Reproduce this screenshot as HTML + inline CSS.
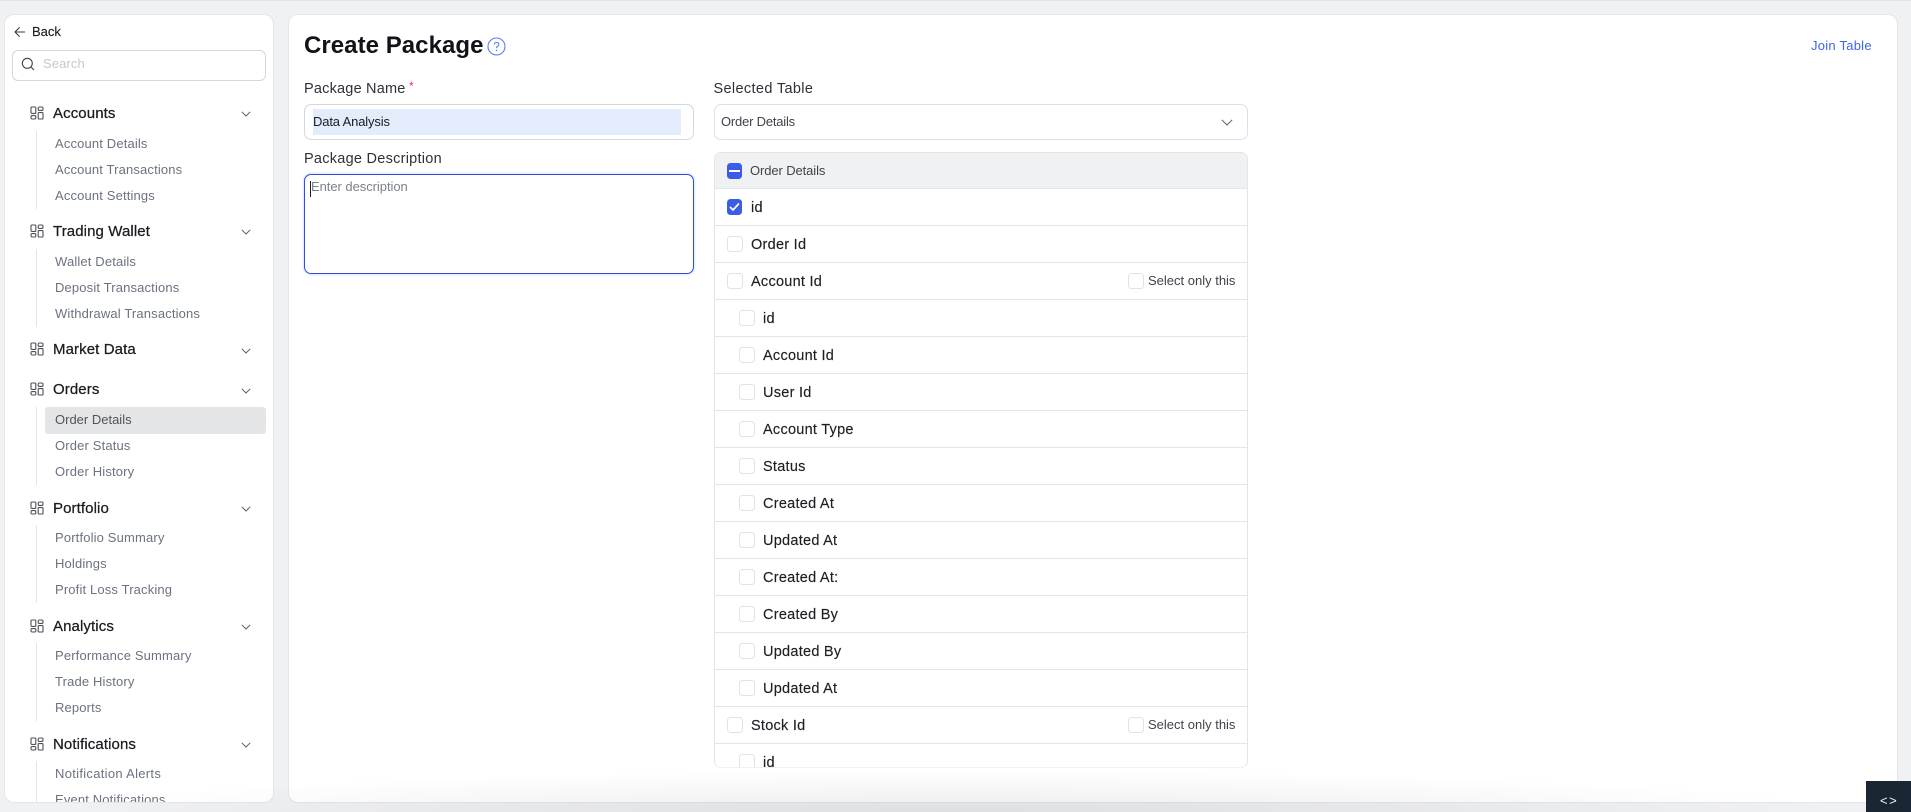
<!DOCTYPE html>
<html><head><meta charset="utf-8"><style>
html,body{margin:0;padding:0;width:1911px;height:812px;overflow:hidden;background:#f0f1f3;font-family:"Liberation Sans",sans-serif;color:#1a1c21}
*{box-sizing:border-box}
.a{position:absolute}
.t{position:absolute;white-space:nowrap;line-height:20px;height:20px}
#top{position:absolute;left:0;top:0;width:1911px;height:1px;background:#e2e5ea}
.card{position:absolute;background:#fff;border:1px solid #e4e6e9;border-radius:10px;top:14px;height:789px;overflow:hidden}
.h{font-size:15px;letter-spacing:.1px;color:#1a1c21;left:48px;margin-top:1px;-webkit-text-stroke:.25px #1a1c21}
.s{font-size:13px;letter-spacing:.15px;color:#6b7280;left:50px;margin-top:1px}
.line{position:absolute;left:31px;width:1px;background:#e1e5ea}
.ic{position:absolute;left:25px}
.ch{position:absolute;left:236px}
.row{position:absolute;left:0;width:100%;height:37px;border-bottom:1px solid #e2e5ea}
.cb{position:absolute;width:16px;height:16px;border:1px solid #dfe2e7;border-radius:3.5px;background:#fff;margin-top:-1px}
.cb.sub{margin-left:1px}
.lbl{position:absolute;font-size:14.5px;line-height:20px;white-space:nowrap;letter-spacing:.26px;color:#1d1f24;margin-left:2px;-webkit-text-stroke:.15px #1d1f24}
.lbl.sub{margin-left:3px}
.only{position:absolute;left:433px;top:9px;font-size:13px;line-height:18px;color:#3f434b;white-space:nowrap;letter-spacing:0;margin-top:-1px}
</style></head><body>
<div id="top"></div>

<div class="card" style="left:4px;width:270px">
 <svg class="a" style="left:9px;top:11px" width="12" height="12" viewBox="0 0 12 12" fill="none" stroke="#3a3d44" stroke-width="1.1"><path d="M11 6H1.2M5.600 1.400 1 6l4.600 4.600"/></svg>
 <div class="t" style="left:27px;top:7px;font-size:13px;letter-spacing:0;-webkit-text-stroke:.15px #1a1c21">Back</div>
 <div class="a" style="left:7px;top:35px;width:254px;height:31px;border:1px solid #d5d7da;border-radius:6px"></div>
 <svg class="a" style="left:16px;top:42px" width="14" height="14" viewBox="0 0 14 14" fill="none" stroke="#3f434b" stroke-width="1.1"><circle cx="6.300" cy="6.300" r="5"/><path d="m10 10 3 3"/></svg>
 <div class="t" style="left:38px;top:39px;font-size:13px;color:#c5c8cd;letter-spacing:.1px">Search</div>

 <div class="a" style="left:40px;top:392px;width:221px;height:27px;background:#e4e5e7;border-radius:3px"></div>

 <!-- Accounts -->
 <svg class="ic" style="top:91px" width="14" height="14" viewBox="0 0 14 14" fill="none" stroke="#4b4f57" stroke-width="1.1"><rect x="1" y="1" width="4.8" height="6.4" rx=".8"/><rect x="8.2" y="1" width="4.8" height="3.4" rx="1.2"/><rect x="1" y="9.6" width="4.8" height="3.4" rx="1.2"/><rect x="8.2" y="6.6" width="4.8" height="6.4" rx=".8"/></svg>
 <div class="t h" style="top:88px">Accounts</div>
 <svg class="ch" style="top:96px" width="10" height="6" viewBox="0 0 10 6" fill="none" stroke="#5c6068" stroke-width="1"><path d="m.8.8 4.2 4.2L9.200.8"/></svg>
 <div class="line" style="top:116px;height:78px"></div>
 <div class="t s" style="top:118px">Account Details</div>
 <div class="t s" style="top:144px">Account Transactions</div>
 <div class="t s" style="top:170px">Account Settings</div>

 <!-- Trading Wallet -->
 <svg class="ic" style="top:209px" width="14" height="14" viewBox="0 0 14 14" fill="none" stroke="#4b4f57" stroke-width="1.1"><rect x="1" y="1" width="4.8" height="6.4" rx=".8"/><rect x="8.2" y="1" width="4.8" height="3.4" rx="1.2"/><rect x="1" y="9.6" width="4.8" height="3.4" rx="1.2"/><rect x="8.2" y="6.6" width="4.8" height="6.4" rx=".8"/></svg>
 <div class="t h" style="top:206px">Trading Wallet</div>
 <svg class="ch" style="top:214px" width="10" height="6" viewBox="0 0 10 6" fill="none" stroke="#5c6068" stroke-width="1"><path d="m.8.8 4.2 4.2L9.200.8"/></svg>
 <div class="line" style="top:234px;height:78px"></div>
 <div class="t s" style="top:236px">Wallet Details</div>
 <div class="t s" style="top:262px">Deposit Transactions</div>
 <div class="t s" style="top:288px">Withdrawal Transactions</div>

 <!-- Market Data -->
 <svg class="ic" style="top:327px" width="14" height="14" viewBox="0 0 14 14" fill="none" stroke="#4b4f57" stroke-width="1.1"><rect x="1" y="1" width="4.8" height="6.4" rx=".8"/><rect x="8.2" y="1" width="4.8" height="3.4" rx="1.2"/><rect x="1" y="9.6" width="4.8" height="3.4" rx="1.2"/><rect x="8.2" y="6.6" width="4.8" height="6.4" rx=".8"/></svg>
 <div class="t h" style="top:324px">Market Data</div>
 <svg class="ch" style="top:333px" width="10" height="6" viewBox="0 0 10 6" fill="none" stroke="#5c6068" stroke-width="1"><path d="m.8.8 4.2 4.2L9.200.8"/></svg>

 <!-- Orders -->
 <svg class="ic" style="top:367px" width="14" height="14" viewBox="0 0 14 14" fill="none" stroke="#4b4f57" stroke-width="1.1"><rect x="1" y="1" width="4.8" height="6.4" rx=".8"/><rect x="8.2" y="1" width="4.8" height="3.4" rx="1.2"/><rect x="1" y="9.6" width="4.8" height="3.4" rx="1.2"/><rect x="8.2" y="6.6" width="4.8" height="6.4" rx=".8"/></svg>
 <div class="t h" style="top:364px">Orders</div>
 <svg class="ch" style="top:373px" width="10" height="6" viewBox="0 0 10 6" fill="none" stroke="#5c6068" stroke-width="1"><path d="m.8.8 4.2 4.2L9.200.8"/></svg>
 <div class="line" style="top:392px;height:78px"></div>
 <div class="t s" style="top:394px;color:#50545c;letter-spacing:0">Order Details</div>
 <div class="t s" style="top:420px">Order Status</div>
 <div class="t s" style="top:446px">Order History</div>

 <!-- Portfolio -->
 <svg class="ic" style="top:486px" width="14" height="14" viewBox="0 0 14 14" fill="none" stroke="#4b4f57" stroke-width="1.1"><rect x="1" y="1" width="4.8" height="6.4" rx=".8"/><rect x="8.2" y="1" width="4.8" height="3.4" rx="1.2"/><rect x="1" y="9.6" width="4.8" height="3.4" rx="1.2"/><rect x="8.2" y="6.6" width="4.8" height="6.4" rx=".8"/></svg>
 <div class="t h" style="top:483px">Portfolio</div>
 <svg class="ch" style="top:491px" width="10" height="6" viewBox="0 0 10 6" fill="none" stroke="#5c6068" stroke-width="1"><path d="m.8.8 4.2 4.2L9.200.8"/></svg>
 <div class="line" style="top:510px;height:78px"></div>
 <div class="t s" style="top:512px">Portfolio Summary</div>
 <div class="t s" style="top:538px">Holdings</div>
 <div class="t s" style="top:564px">Profit Loss Tracking</div>

 <!-- Analytics -->
 <svg class="ic" style="top:604px" width="14" height="14" viewBox="0 0 14 14" fill="none" stroke="#4b4f57" stroke-width="1.1"><rect x="1" y="1" width="4.8" height="6.4" rx=".8"/><rect x="8.2" y="1" width="4.8" height="3.4" rx="1.2"/><rect x="1" y="9.6" width="4.8" height="3.4" rx="1.2"/><rect x="8.2" y="6.6" width="4.8" height="6.4" rx=".8"/></svg>
 <div class="t h" style="top:601px">Analytics</div>
 <svg class="ch" style="top:609px" width="10" height="6" viewBox="0 0 10 6" fill="none" stroke="#5c6068" stroke-width="1"><path d="m.8.8 4.2 4.2L9.200.8"/></svg>
 <div class="line" style="top:628px;height:78px"></div>
 <div class="t s" style="top:630px">Performance Summary</div>
 <div class="t s" style="top:656px">Trade History</div>
 <div class="t s" style="top:682px">Reports</div>

 <!-- Notifications -->
 <svg class="ic" style="top:722px" width="14" height="14" viewBox="0 0 14 14" fill="none" stroke="#4b4f57" stroke-width="1.1"><rect x="1" y="1" width="4.8" height="6.4" rx=".8"/><rect x="8.2" y="1" width="4.8" height="3.4" rx="1.2"/><rect x="1" y="9.6" width="4.8" height="3.4" rx="1.2"/><rect x="8.2" y="6.6" width="4.8" height="6.4" rx=".8"/></svg>
 <div class="t h" style="top:719px">Notifications</div>
 <svg class="ch" style="top:727px" width="10" height="6" viewBox="0 0 10 6" fill="none" stroke="#5c6068" stroke-width="1"><path d="m.8.8 4.200 4.200L9.200.8"/></svg>
 <div class="line" style="top:746px;height:42px"></div>
 <div class="t s" style="top:748px;letter-spacing:.3px">Notification Alerts</div>
 <div class="t s" style="top:774px">Event Notifications</div>
</div>

<div class="card" style="left:288px;width:1610px">
 <div class="t" style="left:15px;top:16px;height:30px;line-height:30px;font-size:24px;font-weight:700;color:#111318;letter-spacing:.05px">Create Package</div>
 <svg class="a" style="left:198px;top:22px" width="19" height="19" viewBox="0 0 19 19" fill="none"><circle cx="9.500" cy="9.500" r="8.500" stroke="#5b7cf0" stroke-width="1.1"/><path d="M7.300 7.600c0-1.300 1-2.100 2.300-2.100s2.200.8 2.200 2c0 1.700-2.300 1.700-2.300 3.600" stroke="#5b7cf0" stroke-width="1.100" fill="none"/><circle cx="9.500" cy="13.400" r=".8" fill="#5b7cf0"/></svg>
 <div class="t" style="left:1522px;top:21px;font-size:13px;color:#3f65e8;letter-spacing:.25px">Join Table</div>

 <div class="t" style="left:15px;top:64px;font-size:14.5px;color:#2d3036;letter-spacing:.2px">Package Name</div>
 <div class="t" style="left:120px;top:61px;font-size:12px;color:#ef2f4b">*</div>
 <div class="a" style="left:15px;top:89px;width:390px;height:36px;border:1px solid #d5d7da;border-radius:7px"></div>
 <div class="a" style="left:24px;top:94px;width:368px;height:26px;background:#e3ecfb"></div>
 <div class="t" style="left:24px;top:97px;font-size:13px;color:#1a1c21;letter-spacing:-.15px">Data Analysis</div>

 <div class="t" style="left:15px;top:134px;font-size:14.5px;color:#2d3036;letter-spacing:.26px">Package Description</div>
 <div class="a" style="left:15px;top:159px;width:390px;height:100px;border:1.4px solid #2f4be0;border-radius:7px;box-shadow:0 0 0 1.500px #e8eefc"></div>
 <div class="a" style="left:21px;top:166px;width:1px;height:16px;background:#1a1c21"></div>
 <div class="t" style="left:22px;top:162px;font-size:13px;color:#7b818a;letter-spacing:-.05px">Enter description</div>

 <div class="t" style="left:424.500px;top:64px;font-size:14.5px;color:#2d3036;letter-spacing:.35px">Selected Table</div>
 <div class="a" style="left:425px;top:89px;width:534px;height:36px;border:1px solid #dddfee;border-radius:7px"></div>
 <div class="t" style="left:432px;top:97px;font-size:13px;color:#3f434b;letter-spacing:-.2px">Order Details</div>
 <svg class="a" style="left:932px;top:104px" width="12" height="7" viewBox="0 0 12 7" fill="none" stroke="#5c6068" stroke-width="1"><path d="m.8.8 5.200 5.200L11.200.8"/></svg>

 <div class="a" style="left:425px;top:137px;width:534px;height:616px;border:1px solid #e2e5ea;border-radius:7px;overflow:hidden;border-bottom-color:#eff1f3">
  <div class="row" style="top:0;height:36px;background:#f0f1f3"></div>
  <div class="a" style="left:12px;top:10px;width:15px;height:16px;background:#3a5ce6;border-radius:3.500px"></div>
  <div class="a" style="left:14px;top:17px;width:11px;height:2px;background:#fff"></div>
  <div class="t" style="left:35px;top:8px;font-size:13px;color:#3f434b;letter-spacing:-.1px">Order Details</div>

  <div class="row" style="top:36px"></div>
  <div class="a" style="left:12px;top:46px;width:15px;height:16px;background:#3a5ce6;border-radius:3.500px"></div>
  <svg class="a" style="left:14px;top:49px" width="11" height="10" viewBox="0 0 11 10" fill="none" stroke="#fff" stroke-width="1.700"><path d="m1 5 3 3 6-6.500"/></svg>
  <div class="lbl" style="left:34px;top:45px">id</div>

  <div class="row" style="top:73px"></div><div class="cb" style="left:12px;top:84px"></div><div class="lbl" style="left:34px;top:82px">Order Id</div>
  <div class="row" style="top:110px"></div><div class="cb" style="left:12px;top:121px"></div><div class="lbl" style="left:34px;top:119px">Account Id</div>
  <div class="cb" style="left:413px;top:121px"></div><div class="only" style="top:120px">Select only this</div>
  <div class="row" style="top:147px"></div><div class="cb sub" style="left:23px;top:158px"></div><div class="lbl sub" style="left:45px;top:156px">id</div>
  <div class="row" style="top:184px"></div><div class="cb sub" style="left:23px;top:195px"></div><div class="lbl sub" style="left:45px;top:193px">Account Id</div>
  <div class="row" style="top:221px"></div><div class="cb sub" style="left:23px;top:232px"></div><div class="lbl sub" style="left:45px;top:230px">User Id</div>
  <div class="row" style="top:258px"></div><div class="cb sub" style="left:23px;top:269px"></div><div class="lbl sub" style="left:45px;top:267px">Account Type</div>
  <div class="row" style="top:295px"></div><div class="cb sub" style="left:23px;top:306px"></div><div class="lbl sub" style="left:45px;top:304px">Status</div>
  <div class="row" style="top:332px"></div><div class="cb sub" style="left:23px;top:343px"></div><div class="lbl sub" style="left:45px;top:341px">Created At</div>
  <div class="row" style="top:369px"></div><div class="cb sub" style="left:23px;top:380px"></div><div class="lbl sub" style="left:45px;top:378px">Updated At</div>
  <div class="row" style="top:406px"></div><div class="cb sub" style="left:23px;top:417px"></div><div class="lbl sub" style="left:45px;top:415px">Created At:</div>
  <div class="row" style="top:443px"></div><div class="cb sub" style="left:23px;top:454px"></div><div class="lbl sub" style="left:45px;top:452px">Created By</div>
  <div class="row" style="top:480px"></div><div class="cb sub" style="left:23px;top:491px"></div><div class="lbl sub" style="left:45px;top:489px">Updated By</div>
  <div class="row" style="top:517px"></div><div class="cb sub" style="left:23px;top:528px"></div><div class="lbl sub" style="left:45px;top:526px">Updated At</div>
  <div class="row" style="top:554px"></div><div class="cb" style="left:12px;top:565px"></div><div class="lbl" style="left:34px;top:563px">Stock Id</div>
  <div class="cb" style="left:413px;top:565px"></div><div class="only" style="top:564px">Select only this</div>
  <div class="row" style="top:591px;border-bottom:0"></div><div class="cb sub" style="left:23px;top:602px"></div><div class="lbl sub" style="left:45px;top:600px">id</div>
 </div>
</div>

<div class="a" style="left:0;top:770px;width:1911px;height:42px;pointer-events:none;background:radial-gradient(ellipse 900px 42px at 950px 42px,rgba(0,0,0,.075),rgba(0,0,0,0))"></div>

<div class="a" style="left:1866px;top:781px;width:45px;height:31px;background:#1b2634"></div>
<div class="t" style="left:1880px;top:791px;font-size:13px;color:#f1f3f5;letter-spacing:1.500px">&lt;&gt;</div>
</body></html>
